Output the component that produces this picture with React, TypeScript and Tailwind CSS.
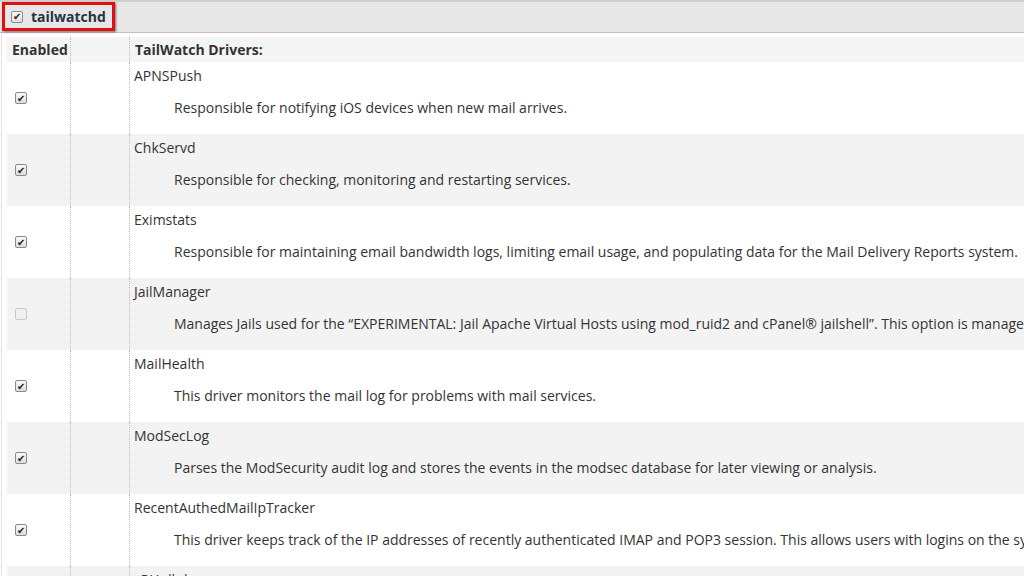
import React from "react"

const drivers = [
  { name: "APNSPush", desc: "Responsible for notifying iOS devices when new mail arrives.", on: true },
  { name: "ChkServd", desc: "Responsible for checking, monitoring and restarting services.", on: true },
  {
    name: "Eximstats",
    desc: "Responsible for maintaining email bandwidth logs, limiting email usage, and populating data for the Mail Delivery Reports system.",
    on: true,
  },
  {
    name: "JailManager",
    desc: "Manages Jails used for the \u201cEXPERIMENTAL: Jail Apache Virtual Hosts using mod_ruid2 and cPanel\u00ae jailshell\u201d. This option is managed automatically.",
    on: false,
    disabled: true,
  },
  { name: "MailHealth", desc: "This driver monitors the mail log for problems with mail services.", on: true },
  {
    name: "ModSecLog",
    desc: "Parses the ModSecurity audit log and stores the events in the modsec database for later viewing or analysis.",
    on: true,
  },
  {
    name: "RecentAuthedMailIpTracker",
    desc: "This driver keeps track of the IP addresses of recently authenticated IMAP and POP3 session. This allows users with logins on the system to relay mail.",
    on: true,
  },
  { name: "cPHulkd", desc: "Monitors logins for brute force attacks.", on: true },
]

function Check({ on, disabled }: { on: boolean; disabled?: boolean }) {
  return (
    <span
      className={`flex h-[12px] w-[12px] shrink-0 items-center justify-center rounded-[2px] border text-[10px] leading-none ${
        disabled ? "border-[#c8c8c8] bg-[#f0f0f0]" : "border-[#8a8a8a] bg-gradient-to-b from-[#fafafa] to-[#dcdcdc]"
      }`}
    >
      {on && <span className="-mt-px text-[#222]">✔</span>}
    </span>
  )
}

export default function App() {
  return (
    <div className="h-[576px] w-[1024px] overflow-hidden bg-white font-['Open_Sans',sans-serif] text-[14px] text-[#333]">
      <div className="h-[33px] border-t-2 border-b border-t-[#cfcfcf] border-b-[#d4b4d4] bg-[#e7e7e7]">
        <div className="ml-[2px] flex h-[29px] w-[113px] items-center gap-[8px] border-[3px] border-[#e01010] pl-[6px] shadow-[1px_1px_2px_rgba(0,0,0,0.5)]">
          <Check on />
          <span className="font-bold text-[#2a3340]">tailwatchd</span>
        </div>
      </div>
      <div className="ml-px border-l border-dotted border-l-[#c8c8c8] pt-[4px] pl-[5px]">
        <div className="flex h-[25px] items-center bg-[#f4f4f4] font-bold">
          <div className="flex h-full w-[64px] shrink-0 items-center border-r border-dotted border-r-[#bdbdbd] pl-[5px]">Enabled</div>
          <div className="h-full w-[59px] shrink-0 border-r border-dotted border-r-[#bdbdbd]" />
          <div className="pl-[5px]">TailWatch Drivers:</div>
        </div>
        {drivers.map((d, i) => (
          <div key={d.name} className={`flex h-[72px] ${i % 2 === 1 ? "bg-[#f3f3f3]" : "bg-white"}`}>
            <div className="flex h-full w-[64px] shrink-0 items-center border-r border-dotted border-r-[#bdbdbd] pl-[8px]">
              <Check on={d.on} disabled={d.disabled} />
            </div>
            <div className="h-full w-[59px] shrink-0 border-r border-dotted border-r-[#bdbdbd]" />
            <div className="min-w-0 flex-1 overflow-hidden whitespace-nowrap pt-[4px] pl-[4px] leading-[20px]">
              <div>{d.name}</div>
              <div className="mt-[12px] pl-[40px]">{d.desc}</div>
            </div>
          </div>
        ))}
      </div>
    </div>
  )
}
